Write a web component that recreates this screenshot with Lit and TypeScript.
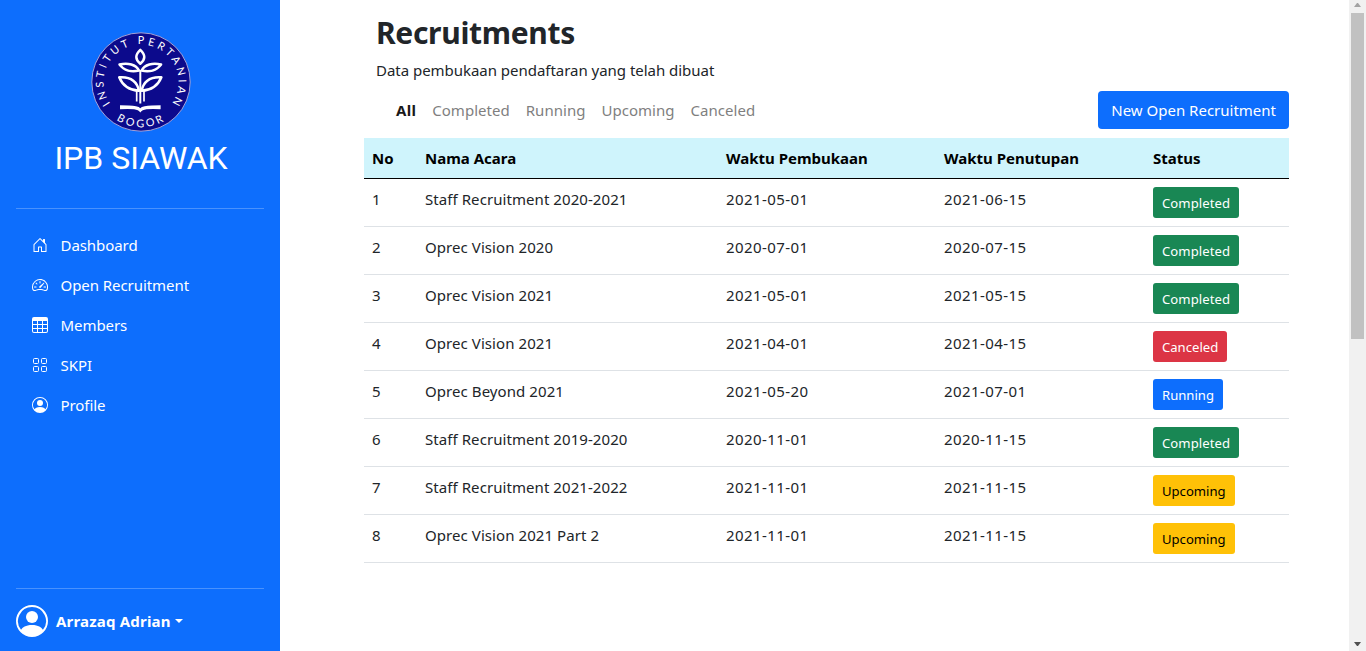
import { LitElement, html, css, svg } from "lit";
import { customElement } from "lit/decorators.js";

const PERSON = svg`<path d="M11 6a3 3 0 1 1-6 0 3 3 0 0 1 6 0z"/><path fill-rule="evenodd" d="M0 8a8 8 0 1 1 16 0A8 8 0 0 1 0 8zm8-7a7 7 0 0 0-5.468 11.37C3.242 11.226 4.805 10 8 10s4.757 1.225 5.468 2.37A7 7 0 0 0 8 1z"/>`;

const NAV = [
  { label: "Dashboard", icon: svg`<path d="M8.354 1.146a.5.5 0 0 0-.708 0l-6 6A.5.5 0 0 0 1.5 7.5v7a.5.5 0 0 0 .5.5h4.5a.5.5 0 0 0 .5-.5v-4h2v4a.5.5 0 0 0 .5.5H14a.5.5 0 0 0 .5-.5v-7a.5.5 0 0 0-.146-.354L13 5.793V2.5a.5.5 0 0 0-.5-.5h-1a.5.5 0 0 0-.5.5v1.293L8.354 1.146zM2.5 14V7.707l5.5-5.5 5.5 5.5V14H10v-4a.5.5 0 0 0-.5-.5h-3a.5.5 0 0 0-.5.5v4H2.5z"/>` },
  { label: "Open Recruitment", icon: svg`<path d="M8 4a.5.5 0 0 1 .5.5V6a.5.5 0 0 1-1 0V4.5A.5.5 0 0 1 8 4zM3.732 5.732a.5.5 0 0 1 .707 0l.915.914a.5.5 0 1 1-.708.708l-.914-.915a.5.5 0 0 1 0-.707zM2 10a.5.5 0 0 1 .5-.5h1.586a.5.5 0 0 1 0 1H2.5A.5.5 0 0 1 2 10zm9.5 0a.5.5 0 0 1 .5-.5h1.5a.5.5 0 0 1 0 1H12a.5.5 0 0 1-.5-.5zm.754-4.246a.389.389 0 0 0-.527-.02L7.547 9.31a.91.91 0 1 0 1.302 1.258l3.434-4.297a.389.389 0 0 0-.029-.518z"/><path fill-rule="evenodd" d="M0 10a8 8 0 1 1 15.547 2.661c-.442 1.253-1.845 1.602-2.932 1.25C11.309 13.488 9.475 13 8 13c-1.474 0-3.31.488-4.615.911-1.087.352-2.49.003-2.932-1.25A7.988 7.988 0 0 1 0 10zm8-7a7 7 0 0 0-6.603 9.329c.203.575.923.876 1.68.63C4.397 12.533 6.358 12 8 12s3.604.532 4.923.96c.757.245 1.477-.056 1.68-.631A7 7 0 0 0 8 3z"/>` },
  { label: "Members", icon: svg`<path d="M0 2a2 2 0 0 1 2-2h12a2 2 0 0 1 2 2v12a2 2 0 0 1-2 2H2a2 2 0 0 1-2-2V2zm15 2h-4v3h4V4zm0 4h-4v3h4V8zm0 4h-4v3h3a1 1 0 0 0 1-1v-2zm-5 3v-3H6v3h4zm-5 0v-3H1v2a1 1 0 0 0 1 1h3zm-4-4h4V8H1v3zm0-4h4V4H1v3zm5-3v3h4V4H6zm4 4H6v3h4V8z"/>` },
  { label: "SKPI", icon: svg`<g fill="none" stroke="currentColor"><rect x="1.5" y="1.5" width="5" height="5" rx="1"/><rect x="9.5" y="1.5" width="5" height="5" rx="1"/><rect x="1.5" y="9.5" width="5" height="5" rx="1"/><rect x="9.5" y="9.5" width="5" height="5" rx="1"/></g>` },
  { label: "Profile", icon: PERSON },
];

const FILTERS = ["All", "Completed", "Running", "Upcoming", "Canceled"];

const ROWS: [string, string, string, string][] = [
  ["Staff Recruitment 2020-2021", "2021-05-01", "2021-06-15", "Completed"],
  ["Oprec Vision 2020", "2020-07-01", "2020-07-15", "Completed"],
  ["Oprec Vision 2021", "2021-05-01", "2021-05-15", "Completed"],
  ["Oprec Vision 2021", "2021-04-01", "2021-04-15", "Canceled"],
  ["Oprec Beyond 2021", "2021-05-20", "2021-07-01", "Running"],
  ["Staff Recruitment 2019-2020", "2020-11-01", "2020-11-15", "Completed"],
  ["Staff Recruitment 2021-2022", "2021-11-01", "2021-11-15", "Upcoming"],
  ["Oprec Vision 2021 Part 2", "2021-11-01", "2021-11-15", "Upcoming"],
];

@customElement("app-root")
export class AppRoot extends LitElement {
  static styles = css`
    * { box-sizing: border-box; }
    :host {
      display: flex; height: 651px; overflow: hidden; background: #fff; color: #212529;
      font: 15px/24px "Noto Sans", "Open Sans", sans-serif; white-space: nowrap;
    }
    .side { width: 280px; flex: none; padding: 16px; background: #0d6efd; color: #fff; display: flex; flex-direction: column; }
    .brand { display: flex; flex-direction: column; align-items: center; padding: 16px 0 0 2px; height: 176px; }
    .logo { display: block; width: 100px; height: 100px; flex: none; }
    .brand-name { font: 400 32px/38px Roboto, sans-serif; margin-top: 7px; }
    .rule { height: 1px; background: rgba(255,255,255,.25); flex: none; margin: 16px 0; }
    .nav { flex: 1; display: flex; flex-direction: column; letter-spacing: -.06px; }
    .item { height: 40px; padding: 8px 16px; display: flex; align-items: center; }
    .item svg { width: 16px; height: 16px; fill: currentColor; margin-right: 12.5px; flex: none; }
    .user { display: flex; align-items: center; height: 32px; margin-bottom: -2px; font-weight: 700; letter-spacing: .19px; }
    .user svg { width: 32px; height: 32px; fill: currentColor; margin-right: 8px; }
    .caret { border: 4.8px solid transparent; border-top-color: currentColor; border-bottom: 0; margin-left: 4px; }
    .main { flex: 1; padding: 11px 60px 0 84px; }
    .title { margin: 0; padding-left: 12px; font-size: 30px; line-height: 44px; font-weight: 700; letter-spacing: -.32px; }
    .sub { margin: 0; padding: 3px 12px 1px; letter-spacing: -.03px; }
    .bar { display: flex; justify-content: space-between; align-items: center; height: 38px; margin-top: 8px; padding-left: 32px; }
    .tabs { display: flex; gap: 16px; color: #7f7f7f; letter-spacing: .03px; }
    .tab.on { color: #191919; font-weight: 700; letter-spacing: .3px; }
    .new { height: 38px; padding: 7px 13px; background: #0d6efd; color: #fff; border-radius: 4px; }
    .table { width: 925px; margin-top: 9px; border-collapse: separate; border-spacing: 0; table-layout: fixed; }
    th, td { padding: 8px; text-align: left; vertical-align: top; }
    th { height: 41px; background: #cff4fc; color: #000; border-bottom: 1px solid #000; font-weight: 700; }
    td { height: 48px; border-bottom: 1px solid #dee2e6; }
    .name { letter-spacing: .07px; }
    .date { letter-spacing: .42px; }
    .c1 { width: 53px; } .c2 { width: 301px; } .c3 { width: 218px; } .c4 { width: 209px; } .c5 { width: 144px; }
    .tag { display: block; width: fit-content; height: 31px; padding: 5px 9px; font-size: 13.1px; line-height: 22px; color: #fff; border-radius: 3px; }
    .Completed { background: #198754; letter-spacing: .08px; }
    .Canceled { background: #dc3545; }
    .Running { background: #0d6efd; }
    .Upcoming { background: #ffc107; color: #000; }
    .scroll { width: 17px; flex: none; background: #f1f1f1; padding: 3px 2px 5px; display: flex; flex-direction: column; align-items: center; }
    .scroll svg { width: 7px; height: 4px; display: block; flex: none; }
    .thumb { width: 13px; height: 326px; background: #c1c1c1; margin-top: 6px; margin-bottom: auto; flex: none; }
    .ring { font: 400 10.8px Lato, sans-serif; fill: #fff; }
  `;

  render() {
    return html`
      <aside class="side">
        <div class="brand">
          <svg class="logo" viewBox="0 0 100 100">
            <defs>
              <path id="top" d="M50 50m-37.500 0a37.500 37.500 0 1 1 75 0a37.500 37.500 0 1 1 -75 0" transform="rotate(-35 50 50)"/>
              <path id="bot" d="M4.700 50a45.300 45.300 0 0 0 90.600 0"/>
            </defs>
            <circle cx="50" cy="50" r="49.200" fill="#0c0a8c" stroke="#b4b0dc" stroke-width=".9"/>
            <text class="ring"><textPath href="#top" textLength="163" lengthAdjust="spacing">INSTITUT PERTANIAN</textPath></text>
            <text class="ring"><textPath href="#bot" startOffset="45" textLength="50" lengthAdjust="spacing">BOGOR</textPath></text>
            <g fill="none" stroke="#fff" stroke-width="2.500" stroke-linejoin="round">
              <path d="M49.300 17.800c-5.300 5-5.300 9.500 0 14c5.300-4.500 5.300-9 0-14z"/>
              <path d="M48 38.500c-3-6-11-8-19.500-6c4.500 6 12 8 19.500 6zM50.600 38.500c3-6 11-8 19.500-6c-4.500 6-12 8-19.500 6z"/>
              <path d="M48 58.800c-2-9.500-9-14.300-19.800-13.500c3.500 8.500 10 13 19.800 13.500zM50.600 58.800c2-9.500 9-14.300 19.800-13.500c-3.500 8.500-10 13-19.800 13.500z"/>
              <path d="M49.300 38v33.500" stroke-width="2"/>
              <path d="M45.700 58.500v11M53 58.500v11" stroke-width="1.700"/>
            </g>
            <path fill="#fff" d="M29 73.300q10 0 16 1q3.300.7 4.300 2q1-1.300 4.300-2q6-1 16-1v4q-8-.5-14 0q-4.500.5-6.300 3.200q-1.800-2.700-6.300-3.200q-6-.5-14 0z"/>
          </svg>
          <div class="brand-name">IPB SIAWAK</div>
        </div>
        <div class="rule"></div>
        <nav class="nav">
          ${NAV.map((n) => html`<div class="item"><svg viewBox="0 0 16 16">${n.icon}</svg><span>${n.label}</span></div>`)}
        </nav>
        <div class="rule"></div>
        <div class="user"><svg viewBox="0 0 16 16">${PERSON}</svg><span>Arrazaq Adrian</span><i class="caret"></i></div>
      </aside>
      <main class="main">
        <h2 class="title">Recruitments</h2>
        <p class="sub">Data pembukaan pendaftaran yang telah dibuat</p>
        <div class="bar">
          <div class="tabs">${FILTERS.map((f, i) => html`<span class="tab ${i ? "" : "on"}">${f}</span>`)}</div>
          <div class="new">New Open Recruitment</div>
        </div>
        <table class="table">
          <thead><tr><th class="c1">No</th><th class="c2">Nama Acara</th><th class="c3">Waktu Pembukaan</th><th class="c4">Waktu Penutupan</th><th class="c5">Status</th></tr></thead>
          <tbody>
            ${ROWS.map(([name, from, to, status], i) => html`<tr><td>${i + 1}</td><td class="name">${name}</td><td class="date">${from}</td><td class="date">${to}</td><td><span class="tag ${status}">${status}</span></td></tr>`)}
          </tbody>
        </table>
      </main>
      <div class="scroll">
        <svg viewBox="0 0 7 4" fill="#a3a3a3"><path d="M0 4h7L4 0H3z"/></svg>
        <div class="thumb"></div>
        <svg viewBox="0 0 7 4" fill="#505050"><path d="M0 0h7L4 4H3z"/></svg>
      </div>
    `;
  }
}
